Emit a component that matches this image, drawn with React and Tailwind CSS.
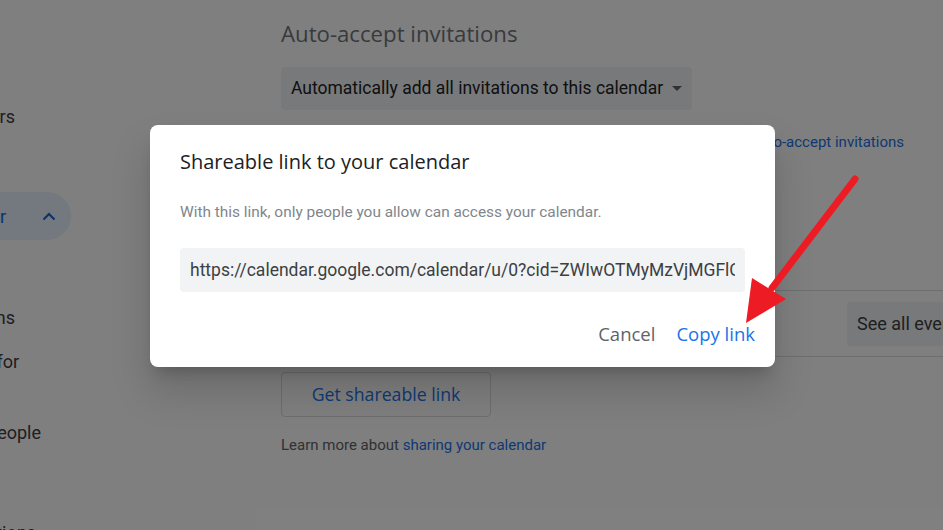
import React from 'react';

const SideText = ({ label, end, className }) => (
  <div className={`flex h-10 items-center ${className}`}>
    <div className="flex justify-end" style={{ width: end }}>
      <span className="whitespace-nowrap">{label}</span>
    </div>
  </div>
);

const App = () => {
  return (
    <div className="relative h-[530px] w-[943px] overflow-hidden bg-white font-['Roboto',sans-serif]">
      <div className="flex">
        {/* sidebar, mostly scrolled out of view */}
        <div className="flex w-[281px] shrink-0 flex-col overflow-hidden pt-[96px] text-[18px] text-[#3c4043]">
          <SideText label="Settings for my calendars" end={15} className="" />
          <div className="mt-[56px] flex h-12 w-[71px] items-center rounded-r-[24px] bg-[#e8f0fe] text-[#1967d2]">
            <div className="flex justify-end" style={{ width: 6 }}>
              <span className="whitespace-nowrap">My Calendar</span>
            </div>
            <svg className="ml-[36px]" width="14" height="9" viewBox="0 0 14 9">
              <path d="M1.5 7.5 L7 2 L12.5 7.5" fill="none" stroke="#1967d2" strokeWidth="2.2" />
            </svg>
          </div>
          <SideText label="Access permissions" end={15} className="mt-[57px]" />
          <SideText label="Integrate for" end={19} className="mt-[4px]" />
          <SideText label="Share with specific people" end={41} className="mt-[31px]" />
          <SideText label="Event notifications" end={36} className="mt-[60px]" />
        </div>

        {/* main settings column */}
        <div className="w-[720px] shrink-0 pt-[20px]">
          <h2 className="h-[28px] font-['Open_Sans',sans-serif] text-[22.2px] leading-[28px] text-[#70757a]">
            Auto-accept invitations
          </h2>
          <div className="mt-[19px] flex h-[43px] w-[411px] items-center justify-between rounded-[4px] bg-[#f1f3f4] pl-[10px] pr-[10px]">
            <span className="text-[17.5px] text-[#202124]">Automatically add all invitations to this calendar</span>
            <svg width="10" height="5" viewBox="0 0 10 5">
              <path d="M0 0 L10 0 L5 5 Z" fill="#5f6368" />
            </svg>
          </div>
          <p className="mt-[22px] h-5 w-[623px] text-right text-[15px] leading-5 text-[#3c4043]">
            Calendar owners can turn this off.{' '}
            <span className="text-[#1a73e8]">Learn more about auto-accept invitations</span>
          </p>

          <div className="mt-[138px] border-t border-[#dadce0]" />
          <div className="flex h-[65px] items-center">
            <div className="w-[566px] text-[16px] text-[#3c4043]">Export calendar</div>
            <button className="h-[44px] whitespace-nowrap rounded-[4px] bg-[#f1f3f4] px-[10px] text-[18px] text-[#3c4043]">
              See all events
            </button>
          </div>
          <div className="border-t border-[#dadce0]" />

          <button className="mt-[15px] h-[45px] w-[210px] rounded-[4px] border border-[#dadce0] font-['Open_Sans',sans-serif] text-[17.7px] font-medium text-[#1a73e8]">
            Get shareable link
          </button>
          <p className="mt-[18px] h-5 text-[15px] leading-5 text-[#5f6368]">
            Learn more about <span className="text-[#1a73e8]">sharing your calendar</span>
          </p>
        </div>
      </div>

      {/* scrim */}
      <div className="absolute inset-0 bg-black/50" />

      {/* dialog */}
      <div className="absolute left-[150px] top-[125px] w-[625px] rounded-[8px] bg-white pb-[15px] pl-[30px] pr-[20px] pt-[23px] shadow-[0_11px_15px_-7px_rgba(0,0,0,0.2),0_24px_38px_3px_rgba(0,0,0,0.14)]">
        <h3 className="h-[28px] font-['Open_Sans',sans-serif] text-[20px] leading-[28px] text-[#202124]">
          Shareable link to your calendar
        </h3>
        <p className="mt-[26px] h-5 text-[15.4px] leading-5 text-[#80868b]">
          With this link, only people you allow can access your calendar.
        </p>
        <div className="mt-[26px] flex h-[44px] w-[565px] items-center overflow-hidden rounded-[4px] bg-[#f1f3f4] px-[10px]">
          <span className="overflow-hidden whitespace-nowrap text-[17.5px] text-[#3c4043]">
            https://calendar.google.com/calendar/u/0?cid=ZWIwOTMyMzVjMGFlOGQ4ZmE3
          </span>
        </div>
        <div className="mt-[24px] flex h-[36px] items-center justify-end gap-[21px] font-['Open_Sans',sans-serif] text-[18.5px] font-medium">
          <button className="text-[#5f6368]">Cancel</button>
          <button className="text-[#1a73e8]">Copy link</button>
        </div>
      </div>

      {/* red annotation arrow */}
      <svg className="pointer-events-none absolute left-0 top-0" width="943" height="530" viewBox="0 0 943 530">
        <line x1="855" y1="179" x2="772" y2="288" stroke="#ed1c24" strokeWidth="7" strokeLinecap="round" />
        <path d="M746 323 L752 278 L786 299 Z" fill="#ed1c24" />
      </svg>
    </div>
  );
};

export default App;
